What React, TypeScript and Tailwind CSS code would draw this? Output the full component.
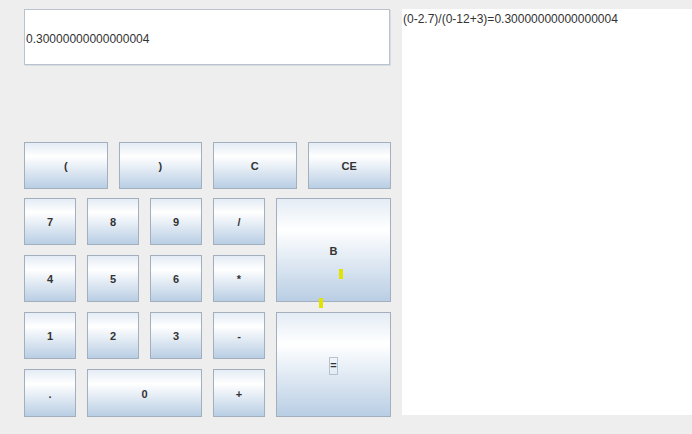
import React from "react"

/* ---------- Button ---------- */
function Key({ label, className = "", focus = false }: { label: string; className?: string; focus?: boolean }) {
  return (
    <div
      className={`flex items-center justify-center border border-[#a3afbc] bg-gradient-to-b from-[#e4ecf5] via-[#ffffff] via-30% to-[#b9cee4] pt-[2px] text-[11px] font-bold text-[#333333] ${className}`}
    >
      {focus ? (
        <span className="flex h-[18px] w-[9px] items-center justify-center border border-[#b4c2d2] leading-none">
          {label}
        </span>
      ) : (
        <span>{label}</span>
      )}
    </div>
  )
}

export default function App() {
  return (
    <div
      className="relative flex h-[434px] w-[692px] bg-[#eeeeee] pt-[9px]"
      style={{ fontFamily: '"Liberation Sans", Arial, sans-serif' }}
    >
      {/* Left: display + keypad */}
      <div className="flex w-[402px] flex-col pl-[24px]">
        <div className="flex h-[56px] w-[366px] items-center border border-[#b9c3cd] bg-[#ffffff] pl-[1px] pt-[3px] text-[12px] text-[#333333] shadow-[1px_1px_0_#d8dde3]">
          0.30000000000000004
        </div>

        <div className="mt-[77px] grid w-[367px] grid-cols-4 gap-x-[11px]">
          <Key label="(" className="h-[47px]" />
          <Key label=")" className="h-[47px]" />
          <Key label="C" className="h-[47px]" />
          <Key label="CE" className="h-[47px]" />
        </div>

        <div className="mt-[9px] grid w-[367px] grid-cols-[52px_52px_52px_52px_115px] grid-rows-[47px_47px_47px_48px] gap-x-[11px] gap-y-[10px]">
          <Key label="7" />
          <Key label="8" />
          <Key label="9" />
          <Key label="/" />
          <Key label="B" className="row-span-2" />
          <Key label="4" />
          <Key label="5" />
          <Key label="6" />
          <Key label="*" />
          <Key label="1" />
          <Key label="2" />
          <Key label="3" />
          <Key label="-" />
          <Key label="=" className="row-span-2" focus />
          <Key label="." />
          <Key label="0" className="col-span-2" />
          <Key label="+" />
        </div>
      </div>

      {/* Right: history */}
      <div className="h-[406px] flex-1 bg-[#ffffff] pl-[1px] pt-[3px] text-[12px] leading-[14px] text-[#333333]">
        (0-2.7)/(0-12+3)=0.30000000000000004
      </div>

      {/* stray caret marks */}
      <div className="absolute left-[339px] top-[269px] h-[10px] w-[4px] bg-[#e0e400]" />
      <div className="absolute left-[319px] top-[298px] h-[10px] w-[4px] bg-[#e0e400]" />
    </div>
  )
}
